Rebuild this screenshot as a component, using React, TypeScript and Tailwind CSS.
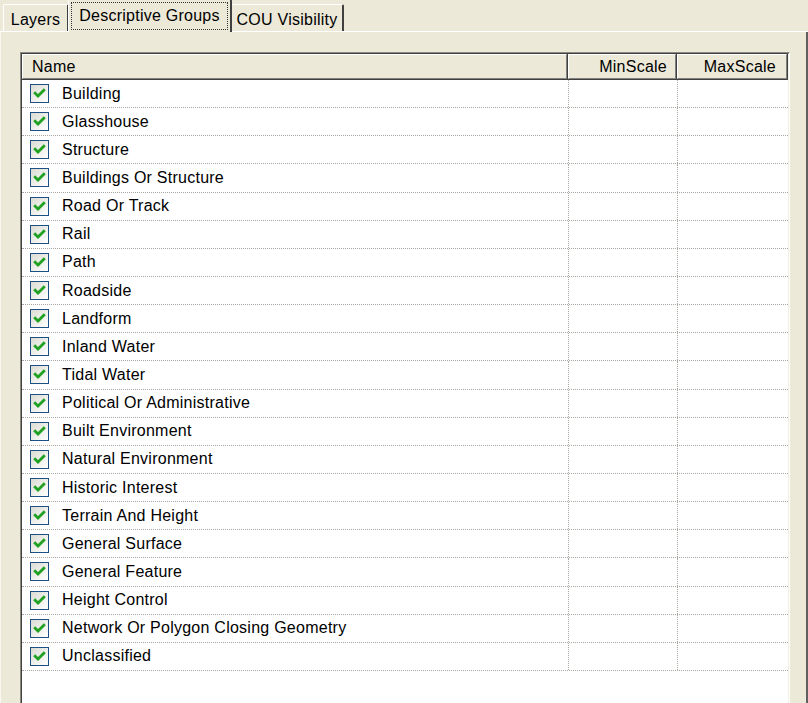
import { useState } from 'react';

const groups = [
    'Building',
    'Glasshouse',
    'Structure',
    'Buildings Or Structure',
    'Road Or Track',
    'Rail',
    'Path',
    'Roadside',
    'Landform',
    'Inland Water',
    'Tidal Water',
    'Political Or Administrative',
    'Built Environment',
    'Natural Environment',
    'Historic Interest',
    'Terrain And Height',
    'General Surface',
    'General Feature',
    'Height Control',
    'Network Or Polygon Closing Geometry',
    'Unclassified'
];

function CheckBox({ checked, onToggle }: { checked: boolean; onToggle: () => void }) {
    return (
        <button
            type="button"
            onClick={onToggle}
            className="w-[19px] h-[19px] shrink-0 border-[1.5px] border-[#1c4f84] bg-gradient-to-br from-[#dcdcd4] to-white flex items-center justify-center"
        >
            {checked && (
                <svg width="15" height="15" viewBox="0 0 15 15">
                    <path d="M3.2 7.2 L6 10 L11.8 4.2" fill="none" stroke="#21a121" strokeWidth="2.8" strokeLinecap="square" />
                </svg>
            )}
        </button>
    );
}

function HeaderCell({ label, className, align }: { label: string; className: string; align: 'left' | 'right' }) {
    return (
        <div className={`${className} h-full shrink-0 border-r border-b border-[#404040]`}>
            <div
                className={`h-full border-t border-l border-white border-r border-b border-r-[#808080] border-b-[#808080] flex items-center ${
                    align === 'left' ? 'justify-start pl-[9px]' : 'justify-end'
                }`}
            >
                {label}
            </div>
        </div>
    );
}

export default function App() {
    const [tab, setTab] = useState(1);
    const [checked, setChecked] = useState<boolean[]>(groups.map(() => true));

    const tabs = ['Layers', 'Descriptive Groups', 'COU Visibility'];

    return (
        <div className="w-[808px] h-[703px] overflow-hidden bg-[#ece9d8] font-['Liberation_Sans',Arial,sans-serif] text-[16px] tracking-[0.25px] text-black flex flex-col">
            {/* tab strip */}
            <div className="h-[32px] shrink-0 flex items-end pl-[3px] border-b border-white">
                {tabs.map((t, i) => {
                    const active = i === tab;
                    if (active) {
                        return (
                            <div
                                key={t}
                                onClick={() => setTab(i)}
                                className="relative z-10 -mb-px -ml-[1px] w-[164px] h-[33px] bg-[#ece9d8] border-t border-l border-white rounded-tl-[2px] rounded-tr-[2px] border-r-2 border-r-[#404040] p-[2px]"
                            >
                                <div className="h-[28px] border border-dotted border-[#333] flex items-center justify-center">
                                    {t}
                                </div>
                            </div>
                        );
                    }
                    return (
                        <div
                            key={t}
                            onClick={() => setTab(i)}
                            className={`${i === 0 ? 'w-[66px]' : 'w-[113px] -ml-[1px]'} h-[27px] border-t border-l border-white rounded-tl-[2px] rounded-tr-[2px] border-r-2 border-r-[#404040] flex items-center justify-center pt-[3px] cursor-default`}
                        >
                            {t}
                        </div>
                    );
                })}
            </div>

            {/* tab page */}
            <div className="flex-1 border-l border-[#f8f7f0] border-r-2 border-r-[#606060] pl-[19px] pr-[16px] pt-[20px]">
                <div className="h-[700px] border-t border-l border-[#8a8a80] border-r border-r-white">
                    <div className="h-full border-t border-l border-[#404040] border-r border-r-[#f1efe2] bg-white">
                        {/* column headers */}
                        <div className="h-[26px] flex bg-[#ece9d8]">
                            <HeaderCell label="Name" className="w-[546px]" align="left" />
                            <HeaderCell label="MinScale" className="w-[109px] [&>div]:pr-[8px]" align="right" />
                            <HeaderCell label="MaxScale" className="flex-1 [&>div]:pr-[10px]" align="right" />
                        </div>

                        {/* rows */}
                        {groups.map((g, i) => (
                            <div key={g} className="h-[28.15px] flex border-b border-dotted border-[#a8a8a0]">
                                <div className="w-[547px] shrink-0 border-r border-dotted border-[#a8a8a0] flex items-center pl-[8px] gap-[13px]">
                                    <CheckBox
                                        checked={checked[i]}
                                        onToggle={() => setChecked((c) => c.map((v, j) => (j === i ? !v : v)))}
                                    />
                                    <span>{g}</span>
                                </div>
                                <div className="w-[109px] shrink-0 border-r border-dotted border-[#a8a8a0]" />
                                <div className="flex-1" />
                            </div>
                        ))}
                    </div>
                </div>
            </div>
        </div>
    );
}
